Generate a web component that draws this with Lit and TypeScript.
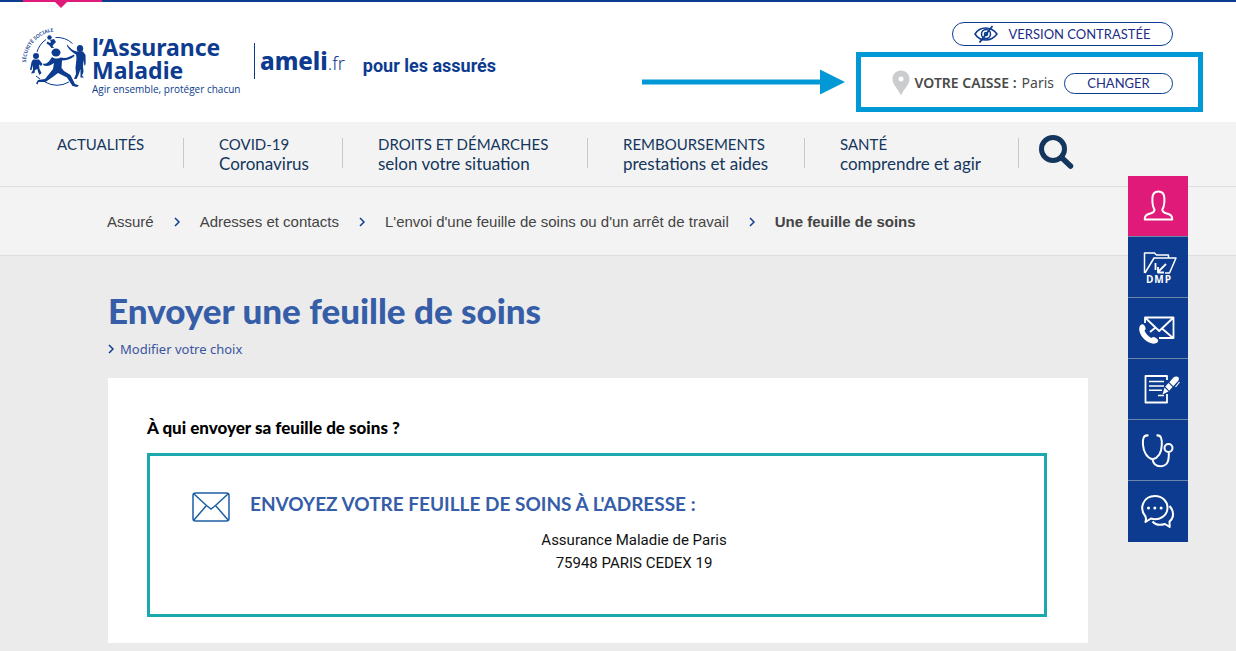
import { LitElement, html, css, svg } from "lit";
import { customElement, property } from "lit/decorators.js";

interface NavEntry {
  title: string;
  sub?: string;
}

const NAV: NavEntry[] = [
  { title: "ACTUALITÉS" },
  { title: "COVID-19", sub: "Coronavirus" },
  { title: "DROITS ET DÉMARCHES", sub: "selon votre situation" },
  { title: "REMBOURSEMENTS", sub: "prestations et aides" },
  { title: "SANTÉ", sub: "comprendre et agir" },
];

const CRUMBS = [
  "Assuré",
  "Adresses et contacts",
  "L'envoi d'une feuille de soins ou d'un arrêt de travail",
];

// Shortcut icons share a 60 × 60 grid, one cell of the side bar.
const SHORTCUTS = [
  {
    label: "Mon compte",
    art: svg`<path d="M26.500 33.500C24.800 31 24.200 28.500 24.400 22.500C24.400 17.800 26.500 15.500 30.400 15.500S36.400 17.800 36.400 22.500C36.600 28.500 36 31 34.300 33.500C34.300 35.500 35.500 36.500 38 37.300C43 38.500 44.300 40 44.300 43.600H16.700C16.700 40 18 38.500 23 37.300C25.500 36.500 26.500 35.500 26.500 33.500Z"/>`,
  },
  {
    label: "Dossier médical partagé",
    art: svg`<path d="M16.500 36V16H26.500L28.500 18H40.500V21M17 36L26 21H48L41.500 36H37" stroke-width="1.500"/><path d="M27.500 26V33M30 35L38 27M30 30V35.500H36" stroke-width="1.800"/><text class="dmp" x="31" y="46" text-anchor="middle">DMP</text>`,
  },
  {
    label: "Nous contacter",
    art: svg`<path d="M17 25V19.500H45.500V40H31M17.500 20L31.200 33L45 20M34 30.500L44.500 39.500M27.500 29.500L22 34" stroke-width="1.800"/><path class="solid" d="M12.500 27C14.500 25.500 16 26.500 17 28.500C18 30.500 17.800 31.500 16.500 32.700C18 36 20.500 38.500 23.500 40C24.700 38.700 26 38.500 28 40C30 41.500 31 42.500 29.500 44.200C26.500 47 21 45.500 16.500 41.500C12 37.500 9.500 30.500 12.500 27Z"/>`,
  },
  {
    label: "Démarches",
    art: svg`<path d="M39 21V17H17.500V43.500H39V35" stroke-width="1.800"/><path d="M21 22.500H36M21 27H36M21 31.300H34M30 36.500H36" stroke-width="1.400"/><path class="solid" d="M34.500 35.500L36.500 28.500L40.500 32.500ZM37.300 27.500L40.500 24L44.500 28L41.200 31.700ZM41.300 23.200L45.500 18.500C47.500 16.500 52.500 17.500 50.500 21.500L45.300 27.200Z"/><path d="M51.500 23L47.500 28" stroke-width="1.200"/>`,
  },
  {
    label: "Annuaire santé",
    art: svg`<path d="M20.500 15.500C15 14.500 14.500 20 15 25C15.500 32 19 38 24.500 39.300C30.500 38 33.500 32 33.800 25C34 20 33.500 14.500 28.500 15.500M24.500 39.500C25.500 44 27.500 46.200 32 46.200C38 46.200 41.200 43.500 40.800 32.500"/><circle cx="40.500" cy="28" r="4"/>`,
  },
  {
    label: "Forum",
    art: svg`<path d="M18 38L17.500 35.500C10.500 27 15.500 15 27 15C34.500 15 39.500 20.500 39.500 26.500C39.500 35 31 40 23 37.500L17.500 41Z"/><path d="M41.500 25C46.500 30.500 46 37 41.500 40.500L41.700 46L37 43C32 44.500 27 43.500 24.500 40.500"/><g class="solid"><circle cx="20.500" cy="27" r="1.500"/><circle cx="26.800" cy="27" r="1.500"/><circle cx="33.100" cy="27" r="1.500"/></g>`,
  },
];

@customElement("ameli-chevron")
export class AmeliChevron extends LitElement {
  static styles = css`
    :host { display: inline-flex; color: #0c3b8f; }
  `;
  render() {
    return html`<svg width="6" height="10" viewBox="0 0 6 10" fill="none" stroke="currentColor" stroke-width="1.500" aria-hidden="true"><path d="M1 1L5 5L1 9"/></svg>`;
  }
}

@customElement("ameli-logo")
export class AmeliLogo extends LitElement {
  static styles = css`
    :host { display: flex; align-items: flex-start; color: #0c3b8f; font-family: "Noto Sans", sans-serif; }
    .emblem { display: block; }
    .arc { font: 600 5px "Noto Sans", sans-serif; }
    .words { padding: 10px 0 0 2px; }
    .name { font-weight: 700; font-size: 23px; line-height: 23px; white-space: nowrap; }
    .motto { font-weight: 500; font-size: 10px; line-height: 14px; white-space: nowrap; width: 149px; font-family: "Open Sans", sans-serif; }
    .site { display: flex; align-items: center; margin: 17px 0 0 13px; height: 36px; border-left: 1px solid #0c3b8f; padding-left: 5px; white-space: nowrap; line-height: 36px; }
    .ameli { font-weight: 800; font-size: 24px; }
    .fr { font-weight: 300; font-size: 18px; padding-top: 4px; }
    .aud { font: 700 18px/36px Roboto, sans-serif; margin: 22px 0 0 18px; white-space: nowrap; }
  `;
  render() {
    return html`
      <svg class="emblem" width="68" height="66" viewBox="22 26 68 66" role="img" aria-label="Sécurité sociale">
        <defs><path id="ring" d="M26 62.500A31 31 0 0 1 60 31.500"/></defs>
        <text class="arc" fill="currentColor"><textPath href="#ring">SÉCURITÉ SOCIALE</textPath></text>
        <path d="M37 52A23 23 0 0 1 46 39.500M55.500 37.500A23 23 0 0 1 72.500 43.500M45 82A25 25 0 0 0 69 82M36 76L40 79" fill="none" stroke="currentColor" stroke-width="1"/>
        <g fill="currentColor">
          <ellipse cx="56" cy="52.500" rx="4.500" ry="4"/>
          <path d="M52 57C55 59 58 59 61 57.500C66 59 70 56.500 74 54.500L74.500 56C70.500 59.500 66 60.500 62 60.500L61.500 68L64 71L70.500 75L75 84L79 85.500L77 87L72.500 86L67 77.500L58 73L52 77.500L45.500 82L38.500 82L37.500 84.500L36 83.500L38 80L45 79L53 69L54 63C50 66 46.500 67 43 65L43.500 63.500C47 64.500 49.500 61 52 57Z"/>
          <circle cx="36" cy="56" r="3"/>
          <path d="M33 59.500H39L42.500 64L41 66L39 64.500L39.500 69L41.500 73L39.500 75L38 72L37.500 69L35 70L34.500 73L31 73.500L33 70V65L31.500 70H30L31.500 62Z"/>
          <ellipse cx="80" cy="48.500" rx="3.200" ry="3.500"/>
          <path d="M67 44.500C70 48 73 51 77 51.500H83L85.500 55L85.700 64L84.500 66L83.700 60L83 66L83.500 72L82 75.500L84 77.500H80.500L80.500 69L78.500 75L76.500 79H74L76 74L75.500 68L76.500 58L76 54.500C72 52.500 69 49.500 67 46Z"/>
          <circle cx="49.500" cy="37.500" r="2.200"/>
          <path d="M50 40L54 39L56 42L54 44L52.500 46L54 48L51.500 48L49 45L46.500 43.500L47.500 41.500L50 43L51 42Z"/>
        </g>
      </svg>
      <div class="words">
        <div class="name">l’Assurance<br />Maladie</div>
        <div class="motto">Agir ensemble, protéger chacun</div>
      </div>
      <div class="site"><span class="ameli">ameli</span><span class="fr">.fr</span></div>
      <div class="aud">pour les assurés</div>
    `;
  }
}

@customElement("ameli-shortcuts")
export class AmeliShortcuts extends LitElement {
  static styles = css`
    :host { display: block; width: 60px; }
    .cell { display: block; height: 60px; background: #0c3b8f; border-bottom: 1px solid #6c88a8; }
    .cell:first-child { background: #e01a78; }
    .cell:last-child { border-bottom-color: #0c3b8f; }
    svg { display: block; fill: none; stroke: #fff; stroke-width: 2; stroke-linejoin: round; }
    .solid { fill: #fff; stroke: none; }
    .dmp { font: 700 10px "Open Sans", sans-serif; letter-spacing: 1px; fill: #fff; stroke: none; }
  `;
  render() {
    return html`${SHORTCUTS.map(
      (s) => html`<a class="cell" href="#" aria-label=${s.label}><svg width="60" height="60" viewBox="0 0 60 60">${s.art}</svg></a>`
    )}`;
  }
}

@customElement("app-root")
export class AppRoot extends LitElement {
  @property() caisse = "Paris";

  static styles = css`
    :host { display: block; position: relative; min-height: 100vh; background: #ebebeb; font-family: Lato, sans-serif; color: #444; }
    a { color: inherit; text-decoration: none; }
    .top { display: flex; justify-content: space-between; min-height: 120px; background: #fff; border-top: 2px solid #0c3b8f; position: relative; }
    .tab { position: absolute; top: -2px; left: 23px; width: 79px; height: 2px; background: #e01a78; }
    .tab svg { display: block; margin: 2px 0 0 32px; }
    ameli-logo { margin: 24px 0 0 22px; }
    .tools { display: flex; flex-direction: column; align-items: flex-end; padding: 20px 33px 10px 0; }
    button { box-sizing: border-box; display: flex; align-items: center; justify-content: center; margin: 0; padding: 0; background: #fff; border: 1px solid #0c3b8f; border-radius: 12px; color: #1d2d86; font: 400 13px/16px Lato, sans-serif; white-space: nowrap; }
    .contrast { gap: 10px; width: 221px; height: 24px; margin-right: 30px; }
    .focus { display: flex; align-items: center; gap: 11px; margin-top: 6px; }
    .frame { box-sizing: border-box; display: flex; align-items: center; justify-content: flex-end; width: 347px; height: 60px; border: 5px solid #0099d6; padding: 2px 25px 0 0; font: 400 14px/20px "Noto Sans", sans-serif; color: #4a4a4a; white-space: nowrap; }
    .frame svg { margin-right: 4px; }
    .frame b { font-weight: 600; margin-right: 5px; }
    .change { width: 109px; height: 21px; margin-left: 10px; }
    .nav { display: grid; grid-template-columns: 162fr 159fr 245fr 217fr 214fr 217fr; padding-left: 22px; min-height: 64px; box-sizing: border-box; background: #f3f3f3; color: #14365c; }
    .item { display: block; padding-top: 13px; padding-left: 35px; line-height: 19px; white-space: nowrap; background: linear-gradient(#c8c8c8, #c8c8c8) right 16px / 1px 30px no-repeat; }
    .title, .sub { display: block; font-size: 15px; }
    .sub { font-size: 17px; }
    .search { justify-self: start; margin: 12px 0 0 20px; width: 36px; height: 36px; border: 0; background: none; }
    .crumbs { display: flex; align-items: center; gap: 20px; box-sizing: border-box; min-height: 70px; padding: 1px 148px 0 107px; background: #f3f3f3; border-top: 1px solid #ddd; border-bottom: 1px solid #ddd; font: 400 15px/20px "Liberation Sans", sans-serif; white-space: nowrap; }
    main { padding: 34px 148px 8px 108px; }
    h1 { margin: 0; font: 900 35px/40px Lato, sans-serif; color: #365da8; }
    .back { display: flex; align-items: center; gap: 6px; margin-top: 10px; font: 400 13px/18px "Noto Sans", sans-serif; color: #3a54a0; }
    .card { margin-top: 20px; padding: 39px 41px 26px 39px; background: #fff; }
    h2 { margin: 0; font: 900 17px/22px Lato, sans-serif; color: #000; }
    .address { display: flex; align-items: flex-start; gap: 20px; min-height: 164px; box-sizing: border-box; margin-top: 14px; padding: 36px 26px 30px 42px; border: 3px solid #1ba9ad; }
    .body { flex: 1; }
    h3 { margin: 0; font: 700 19px/24px Lato, sans-serif; color: #365da8; }
    address { margin-top: 13px; text-align: center; font: 400 15px/23px Roboto, sans-serif; color: #111; }
    ameli-shortcuts { position: absolute; top: 176px; right: 48px; }
  `;

  render() {
    return html`
      <header class="top">
        <div class="tab"><svg width="12" height="6" viewBox="0 0 12 6" fill="#e01a78"><path d="M0 0H12L6 6Z"/></svg></div>
        <ameli-logo></ameli-logo>
        <div class="tools">
          <button class="contrast">
            <svg width="24" height="18" viewBox="0 0 24 18" fill="none" stroke="#0c3b8f" stroke-width="1.500"><path d="M1 9C6 1 17 1 23 9C17 17 6 17 1 9Z"/><circle cx="12" cy="9" r="4.500"/><circle cx="12" cy="9" r="1.500"/><path d="M18.500 1L5.500 17.500" stroke-width="1.800"/></svg>
            VERSION CONTRASTÉE
          </button>
          <div class="focus">
            <svg width="203" height="26" viewBox="0 0 203 26" fill="#0099d6" aria-hidden="true"><path d="M0 10.500H178V.5L203 13L178 25.500V15.500H0Z"/></svg>
            <div class="frame">
              <svg width="20" height="26" viewBox="-1 0 20 26" fill="#cacccd"><path fill-rule="evenodd" d="M9 .5C14 .5 17.500 4.500 17.500 9C17.500 14.500 12.500 18 9 25.500C5.500 18 .5 14.500 .5 9C.5 4.500 4 .5 9 .5ZM9 6.500A2.500 2.500 0 1 0 9 11.500A2.500 2.500 0 1 0 9 6.500Z"/></svg>
              <b>VOTRE CAISSE :</b> ${this.caisse}
              <button class="change">CHANGER</button>
            </div>
          </div>
        </div>
      </header>
      <nav class="nav">
        ${NAV.map((n) => html`<a class="item" href="#"><span class="title">${n.title}</span>${n.sub ? html`<span class="sub">${n.sub}</span>` : ""}</a>`)}
        <button class="search" aria-label="Rechercher">
          <svg width="36" height="36" viewBox="0 0 36 36" fill="none" stroke="#14365c" stroke-linecap="round"><circle cx="14" cy="15" r="11.500" stroke-width="5"/><path d="M22.500 23.500L31.500 32" stroke-width="5.500"/></svg>
        </button>
      </nav>
      <nav class="crumbs" aria-label="Fil d'Ariane">
        ${CRUMBS.map((c) => html`<a href="#">${c}</a><ameli-chevron></ameli-chevron>`)}
        <b>Une feuille de soins</b>
      </nav>
      <main>
        <h1>Envoyer une feuille de soins</h1>
        <a class="back" href="#"><ameli-chevron></ameli-chevron>Modifier votre choix</a>
        <section class="card">
          <h2>À qui envoyer sa feuille de soins ?</h2>
          <div class="address">
            <svg width="38" height="30" viewBox="0 0 38 30" fill="none" stroke="#1c5fa6" stroke-width="1.500"><rect x="1" y="1" width="36" height="28" rx="2.500"/><path d="M1.500 1.500L14.500 13.500L19 17L23.500 13.500L36.500 1.500M1.500 28.500L14.500 13.500M36.500 28.500L23.500 13.500"/></svg>
            <div class="body">
              <h3>ENVOYEZ VOTRE FEUILLE DE SOINS À L'ADRESSE :</h3>
              <address>Assurance Maladie de Paris<br />75948 PARIS CEDEX 19</address>
            </div>
          </div>
        </section>
      </main>
      <ameli-shortcuts></ameli-shortcuts>
    `;
  }
}
